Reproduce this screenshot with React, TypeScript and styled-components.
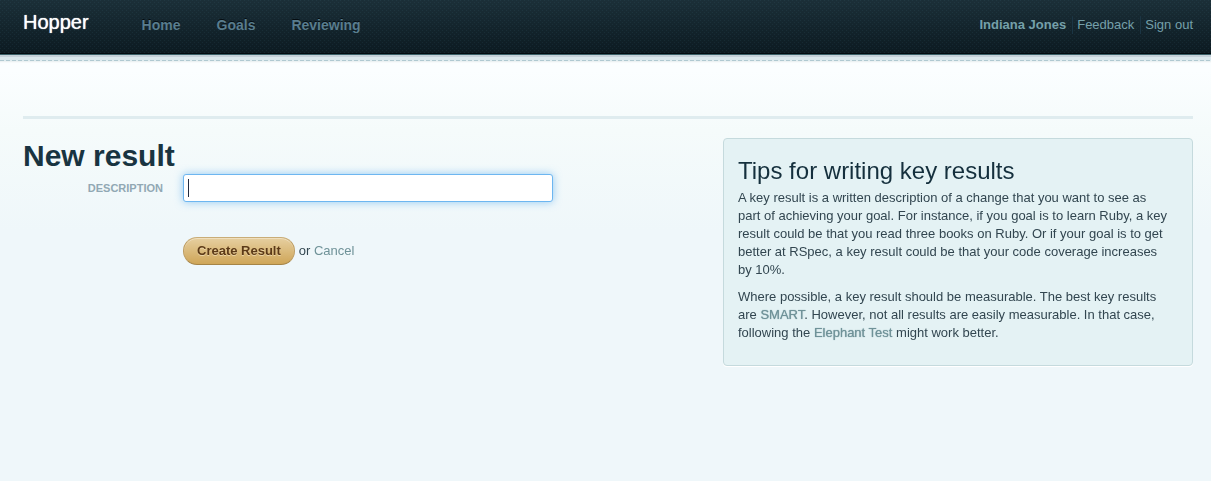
import React from "react";
import styled, { createGlobalStyle } from "styled-components";

const GlobalStyle = createGlobalStyle`
  * { box-sizing: border-box; }
  html { background: #eff7fa; }
  body {
    margin: 0;
    color: #324650;
    font: 13px/18px "Liberation Sans", Arial, Helvetica, sans-serif;
    background: linear-gradient(#fcffff 0, #fbfeff 70px, #f5fbfb 130px, #eff7fa 230px) no-repeat;
  }
`;

const Header = styled.header`
  display: flex;
  align-items: center;
  height: 55px;
  padding: 0 18px 5px 23px;
  border-bottom: 1px solid #3a6068;
  box-shadow: inset 0 -1px 0 #020b10;
  background:
    conic-gradient(from 0deg at 1px 1px, transparent 270deg, rgba(80, 130, 140, 0.12) 0) 0 0 / 4px 4px,
    conic-gradient(from 0deg at 1px 1px, transparent 270deg, rgba(80, 130, 140, 0.12) 0) 2px 2px / 4px 4px,
    linear-gradient(#1b2f38, #0c1a21);
`;

const Brand = styled.a`
  color: #fff;
  font-size: 20px;
  line-height: 24px;
  text-decoration: none;
  text-shadow: 0 0 1px #fff;
  padding-bottom: 6px;
`;

const Nav = styled.nav`
  display: flex;
  gap: 36px;
  margin-left: 53px;
  flex: 1;
`;

const NavLink = styled.a`
  color: #597d8e;
  font-size: 14px;
  font-weight: bold;
  text-decoration: none;
  text-shadow: 0 -1px 0 #050d12;
`;

const Account = styled.div`
  display: flex;
`;

const AccountLink = styled.a<{ $strong?: boolean }>`
  color: #75a0aa;
  font-weight: ${(p) => (p.$strong ? "bold" : "normal")};
  text-decoration: none;
  & + & {
    margin-left: 6px;
    padding-left: 4px;
    border-left: 1px solid #1b3544;
  }
`;

const Stitching = styled.div`
  height: 8px;
  background:
    repeating-linear-gradient(90deg, #b0c9d1 0 4px, #dfecf0 4px 6px) 0 5px / 100% 1px no-repeat,
    linear-gradient(#c5d1d9 0 2px, #d9e7ec 2px 5px, #dfe9ec 5px 6px, #edf2f3 6px 7px, #f7fafb 7px 8px);
`;

const Page = styled.main`
  padding: 53px 18px 24px 23px;
`;

const Columns = styled.div`
  display: grid;
  grid-template-columns: minmax(0, 70fr) minmax(0, 47fr);
  align-items: start;
  padding-top: 19px;
  border-top: 3px solid #dfecef;
`;

const Title = styled.h1`
  margin: 0;
  color: #193441;
  font-size: 30px;
  line-height: 36px;
`;

const Field = styled.div`
  display: grid;
  grid-template-columns: 140px minmax(0, 370px);
  column-gap: 20px;
  align-items: center;
`;

const Label = styled.label`
  color: #91a8b4;
  font-size: 11px;
  font-weight: bold;
  text-align: right;
  text-transform: uppercase;
`;

const TextInput = styled.input`
  width: 100%;
  height: 28px;
  padding: 4px;
  border: 1px solid #c3d6dc;
  border-radius: 3px;
  background: #fff;
  color: #324650;
  font: inherit;
  outline: none;
  &:focus {
    border-color: #6db6f0;
    box-shadow: 0 0 8px rgba(82, 168, 236, 0.6);
  }
  &:focus:placeholder-shown {
    caret-color: transparent;
    background: linear-gradient(#222c40, #222c40) 4px 4px / 1px 18px no-repeat #fff;
  }
`;

const Actions = styled.div`
  display: flex;
  align-items: center;
  gap: 4px;
  margin: 35px 0 0 160px;
`;

const SubmitButton = styled.button`
  height: 28px;
  padding: 0 13px;
  border: 1px solid #bd9c60;
  border-color: #c9ad78 #bd9c60 #a58446;
  border-radius: 14px;
  background: linear-gradient(#e6cfa0, #cfa658);
  box-shadow: inset 0 1px 0 #efdfbe;
  color: #5c3a17;
  font: bold 13px/18px "Liberation Sans", Arial, sans-serif;
  text-shadow: 0 1px 0 #ecd5a6;
  cursor: pointer;
`;

const TextLink = styled.a<{ $heavy?: boolean }>`
  color: #6f9298;
  text-decoration: none;
  text-shadow: ${(p) => (p.$heavy ? "0 0 1px #6f9298" : "none")};
`;

const Tips = styled.aside`
  padding: 18px 22px 23px 14px;
  border: 1px solid #c5dadd;
  border-radius: 4px;
  background: #e4f2f4;
  box-shadow: 0 1px 0 #fff;
`;

const TipsTitle = styled.h2`
  margin: 0 0 4px;
  color: #15303d;
  font-size: 24px;
  font-weight: normal;
  line-height: 28px;
`;

const Paragraph = styled.p`
  margin: 0;
  & + & { margin-top: 9px; }
`;

export default function App() {
  return (
    <>
      <GlobalStyle />
      <Header>
        <Brand href="#">Hopper</Brand>
        <Nav>
          <NavLink href="#home">Home</NavLink>
          <NavLink href="#goals">Goals</NavLink>
          <NavLink href="#reviewing">Reviewing</NavLink>
        </Nav>
        <Account>
          <AccountLink href="#account" $strong>Indiana Jones</AccountLink>
          <AccountLink href="#feedback">Feedback</AccountLink>
          <AccountLink href="#signout">Sign out</AccountLink>
        </Account>
      </Header>
      <Stitching />
      <Page>
        <Columns>
          <form onSubmit={(e) => e.preventDefault()}>
            <Title>New result</Title>
            <Field>
              <Label htmlFor="description">Description</Label>
              <TextInput id="description" type="text" placeholder=" " autoComplete="off" autoFocus />
            </Field>
            <Actions>
              <SubmitButton type="submit">Create Result</SubmitButton>
              <span>or <TextLink href="#cancel">Cancel</TextLink></span>
            </Actions>
          </form>
          <Tips>
            <TipsTitle>Tips for writing key results</TipsTitle>
            <Paragraph>
              A key result is a written description of a change that you want to see as part of
              achieving your goal. For instance, if you goal is to learn Ruby, a key result could be
              that you read three books on Ruby. Or if your goal is to get better at RSpec, a key
              result could be that your code coverage increases by 10%.
            </Paragraph>
            <Paragraph>
              Where possible, a key result should be measurable. The best key results
              are <TextLink href="#smart" $heavy>SMART</TextLink>. However, not all results are easily
              measurable. In that case, following
              the <TextLink href="#elephant-test" $heavy>Elephant Test</TextLink> might work better.
            </Paragraph>
          </Tips>
        </Columns>
      </Page>
    </>
  );
}
